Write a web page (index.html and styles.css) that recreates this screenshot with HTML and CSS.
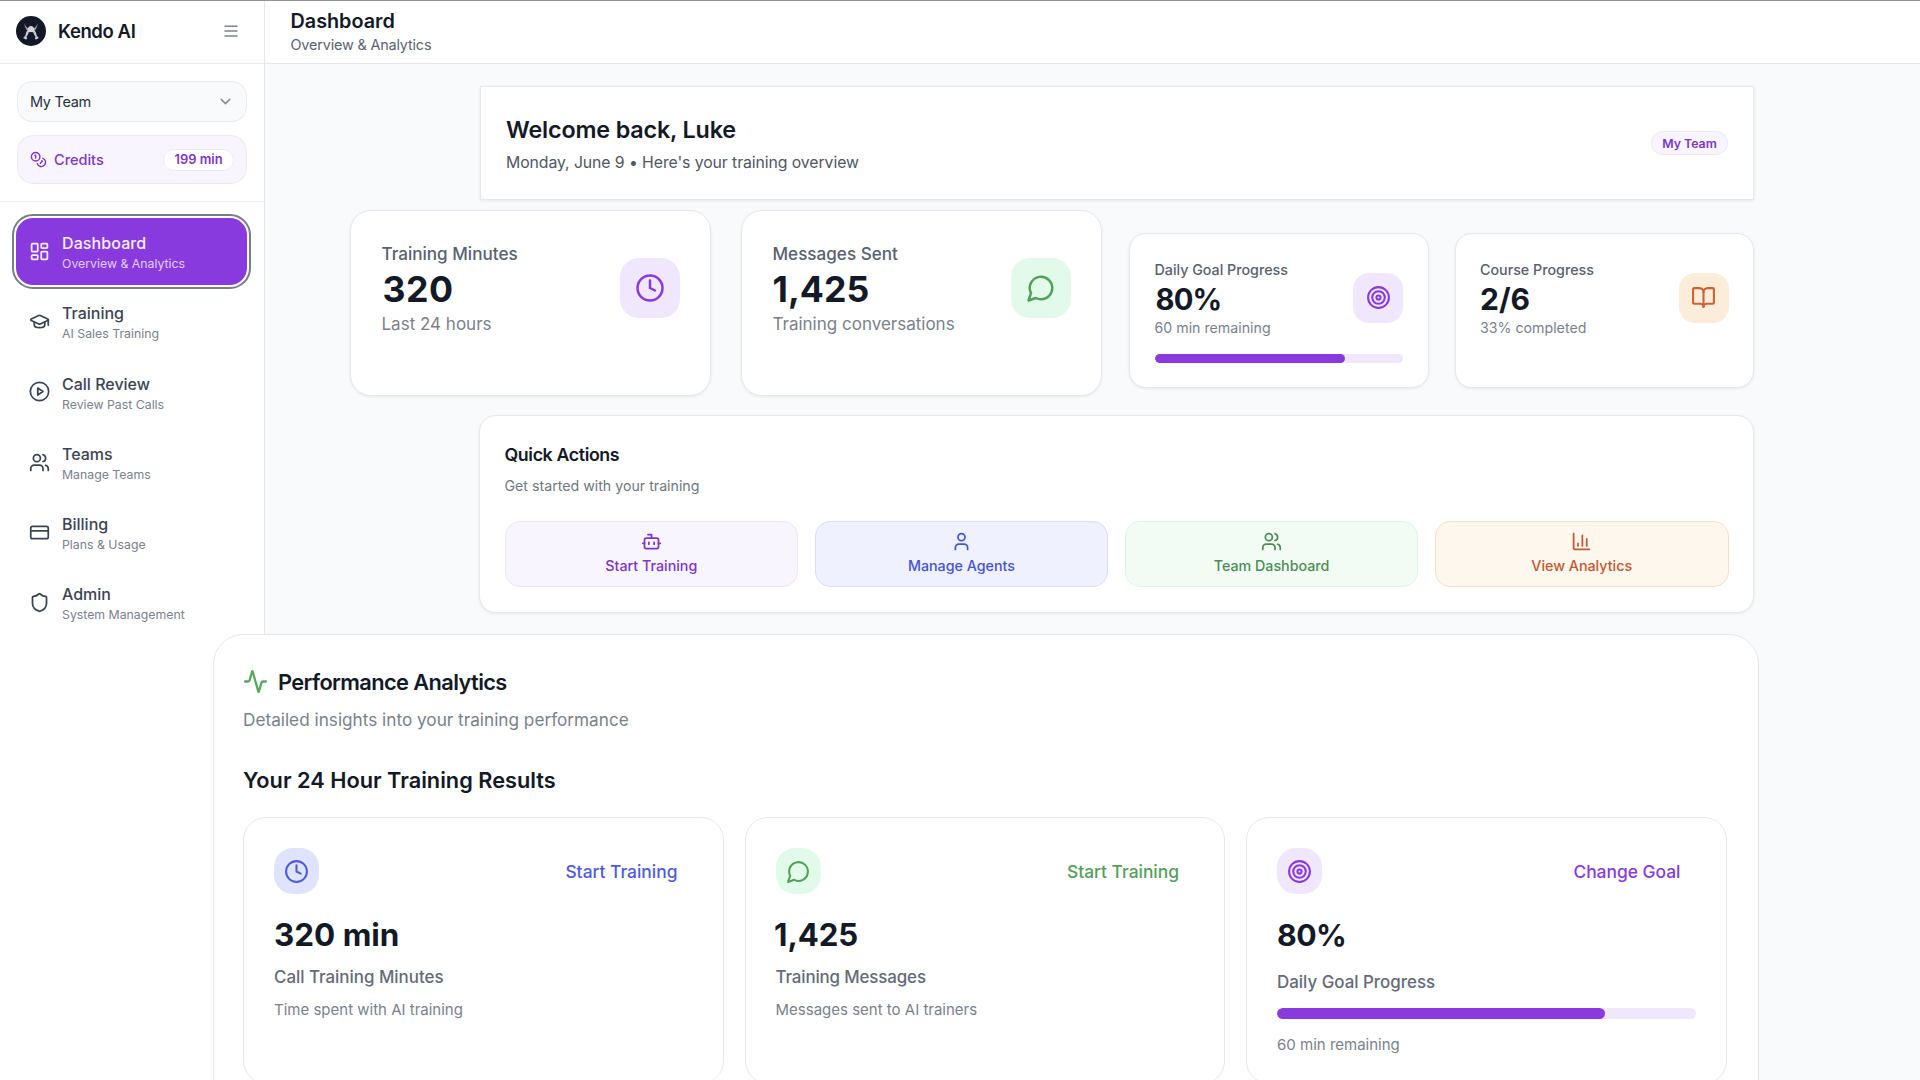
FILE: index.html
```html
<!DOCTYPE html>
<html lang="en">
<head>
<meta charset="utf-8">
<title>Kendo AI – Dashboard</title>
<link rel="stylesheet" href="styles.css">
</head>
<body>
<svg width="0" height="0" class="sprite" aria-hidden="true">
  <symbol id="clock" viewBox="0 0 24 24"><circle cx="12" cy="12" r="10"/><path d="M12 6v6l4 2"/></symbol>
  <symbol id="chat" viewBox="0 0 24 24"><path d="M7.9 20A9 9 0 1 0 4 16.1L2 22Z"/></symbol>
  <symbol id="target" viewBox="0 0 24 24"><circle cx="12" cy="12" r="10"/><circle cx="12" cy="12" r="6"/><circle cx="12" cy="12" r="2"/></symbol>
  <symbol id="users" viewBox="0 0 24 24"><path d="M16 21v-2a4 4 0 0 0-4-4H6a4 4 0 0 0-4 4v2"/><circle cx="9" cy="7" r="4"/><path d="M22 21v-2a4 4 0 0 0-3-3.87"/><path d="M16 3.13a4 4 0 0 1 0 7.75"/></symbol>
</svg>
<div class="app">
  <aside class="sidebar">
    <div class="brand">
      <svg class="logo" viewBox="0 0 30 30"><circle cx="15" cy="15" r="15" fill="#131926"/><path fill="#9fa3ab" d="M8.300 7.200C8.600 10.600 9.800 13.400 12 15l1.400-2C10.800 11.800 9.200 9.800 8.300 7.200zM21.700 7.200C21.400 10.600 20.200 13.400 18 15l-1.400-2C19.200 11.800 20.800 9.800 21.700 7.200z"/><path fill="#d3d5d9" d="M11.600 14.200C11.800 11.600 13.200 10 15 10s3.200 1.600 3.400 4.200l1.400 2.600c-1.500-.5-3-.8-4.800-.8s-3.300.3-4.800.8z"/><path fill="#c3c6cb" d="M10.400 15.600l2.600.8-2.400 4.400.6 2.200c-1.600.6-3.200 0-3.900-1.300l1.900-2zM19.600 15.600l-2.600.8 2.400 4.400-.6 2.200c1.600.6 3.200 0 3.900-1.300l-1.900-2z"/></svg>
      <span class="brand-name">Kendo AI</span>
      <svg class="icon menu" viewBox="0 0 24 24"><path d="M4 5.500h16M4 12h16M4 18.500h16"/></svg>
    </div>
    <div class="account">
      <div class="team-select"><span>My Team</span><svg class="icon chevron" viewBox="0 0 24 24"><path d="m6 9 6 6 6-6"/></svg></div>
      <div class="credits">
        <svg class="icon coins" viewBox="0 0 24 24"><circle cx="8" cy="8" r="6"/><path d="M18.090 10.370A6 6 0 1 1 10.340 18"/><path d="M7 6h1v4"/><path d="m16.710 13.880.7.710-2.820 2.820"/></svg>
        <span class="credits-label">Credits</span><span class="credits-pill">199 min</span>
      </div>
    </div>
    <nav class="nav">
      <a class="nav-item active"><svg class="icon" viewBox="0 0 24 24"><rect x="3" y="3" width="7" height="9" rx="1"/><rect x="14" y="3" width="7" height="5" rx="1"/><rect x="14" y="12" width="7" height="9" rx="1"/><rect x="3" y="16" width="7" height="5" rx="1"/></svg><span class="nav-text"><b>Dashboard</b><small>Overview &amp; Analytics</small></span></a>
      <a class="nav-item"><svg class="icon" viewBox="0 0 24 24"><path d="M21.420 10.922a1 1 0 0 0-.019-1.838L12.830 5.180a2 2 0 0 0-1.660 0L2.600 9.080a1 1 0 0 0 0 1.832l8.570 3.908a2 2 0 0 0 1.660 0z"/><path d="M22 10v6"/><path d="M6 12.500V16a6 3 0 0 0 12 0v-3.500"/></svg><span class="nav-text"><b>Training</b><small>AI Sales Training</small></span></a>
      <a class="nav-item"><svg class="icon" viewBox="0 0 24 24"><circle cx="12" cy="12" r="10.500"/><path d="m10 8 6 4-6 4z"/></svg><span class="nav-text"><b>Call Review</b><small>Review Past Calls</small></span></a>
      <a class="nav-item"><svg class="icon" ><use href="#users"/></svg><span class="nav-text"><b>Teams</b><small>Manage Teams</small></span></a>
      <a class="nav-item"><svg class="icon" viewBox="0 0 24 24"><rect x="2" y="5" width="20" height="14" rx="2"/><path d="M2 10h20"/></svg><span class="nav-text"><b>Billing</b><small>Plans &amp; Usage</small></span></a>
      <a class="nav-item"><svg class="icon" viewBox="0 0 24 24"><path d="M20 13c0 5-3.500 7.500-7.660 8.950a1 1 0 0 1-.67-.01C7.500 20.500 4 18 4 13V6a1 1 0 0 1 1-1c2 0 4.500-1.200 6.240-2.720a1.170 1.170 0 0 1 1.520 0C14.510 3.810 17 5 19 5a1 1 0 0 1 1 1z"/></svg><span class="nav-text"><b>Admin</b><small>System Management</small></span></a>
    </nav>
  </aside>

  <div class="page">
    <header class="topbar">
      <h1>Dashboard</h1>
      <p>Overview &amp; Analytics</p>
    </header>
    <main class="content">
      <section class="welcome">
        <div><h2>Welcome back, Luke</h2><p>Monday, June 9 • Here's your training overview</p></div>
        <span class="team-badge">My Team</span>
      </section>

      <section class="stats">
        <article class="stat large">
          <div class="stat-row"><div class="stat-text"><h3>Training Minutes</h3><strong class="wide">320</strong><p>Last 24 hours</p></div><span class="tile purple"><svg class="icon"><use href="#clock"/></svg></span></div>
        </article>
        <article class="stat large">
          <div class="stat-row"><div class="stat-text"><h3>Messages Sent</h3><strong>1,425</strong><p>Training conversations</p></div><span class="tile green"><svg class="icon"><use href="#chat"/></svg></span></div>
        </article>
        <article class="stat">
          <div class="stat-row"><div class="stat-text"><h3>Daily Goal Progress</h3><strong class="percent">80%</strong><p>60 min remaining</p></div><span class="tile purple"><svg class="icon"><use href="#target"/></svg></span></div>
          <div class="meter"><span style="width:76.8%"></span></div>
        </article>
        <article class="stat">
          <div class="stat-row"><div class="stat-text"><h3>Course Progress</h3><strong>2/6</strong><p>33% completed</p></div><span class="tile orange"><svg class="icon" viewBox="0 0 24 24"><path d="M12 7v14"/><path d="M3 18a1 1 0 0 1-1-1V4a1 1 0 0 1 1-1h5a4 4 0 0 1 4 4 4 4 0 0 1 4-4h5a1 1 0 0 1 1 1v13a1 1 0 0 1-1 1h-6a3 3 0 0 0-3 3 3 3 0 0 0-3-3z"/></svg></span></div>
        </article>
      </section>

      <section class="quick">
        <h2>Quick Actions</h2>
        <p>Get started with your training</p>
        <div class="actions">
          <button class="action purple"><svg class="icon" viewBox="0 0 24 24"><path d="M12 8V4H8"/><rect width="16" height="12" x="4" y="8" rx="2"/><path d="M2 14h2M20 14h2M15 13v2M9 13v2"/></svg>Start Training</button>
          <button class="action indigo"><svg class="icon" viewBox="0 0 24 24"><path d="M19 21v-2a4 4 0 0 0-4-4H9a4 4 0 0 0-4 4v2"/><circle cx="12" cy="7" r="4"/></svg>Manage Agents</button>
          <button class="action green"><svg class="icon"><use href="#users"/></svg>Team Dashboard</button>
          <button class="action orange"><svg class="icon" viewBox="0 0 24 24"><path d="M3 3v16a2 2 0 0 0 2 2h16"/><path d="M18 17V9M13 17V5M8 17v-3"/></svg>View Analytics</button>
        </div>
      </section>

      <section class="performance">
        <h2><svg class="icon" viewBox="0 0 24 24"><path d="M22 12h-2.480a2 2 0 0 0-1.930 1.460l-2.350 8.360a.25.25 0 0 1-.48 0L9.240 2.180a.25.25 0 0 0-.48 0l-2.350 8.360A2 2 0 0 1 4.490 12H2"/></svg>Performance Analytics</h2>
        <p class="lead">Detailed insights into your training performance</p>
        <h3>Your 24 Hour Training Results</h3>
        <div class="results">
          <article class="result">
            <div class="result-top"><span class="tile indigo"><svg class="icon"><use href="#clock"/></svg></span><a class="indigo-text">Start Training</a></div>
            <strong>320 min</strong><h4>Call Training Minutes</h4><p>Time spent with AI training</p>
          </article>
          <article class="result messages">
            <div class="result-top"><span class="tile green"><svg class="icon"><use href="#chat"/></svg></span><a class="green-text">Start Training</a></div>
            <strong>1,425</strong><h4>Training Messages</h4><p>Messages sent to AI trainers</p>
          </article>
          <article class="result goal">
            <div class="result-top"><span class="tile purple"><svg class="icon"><use href="#target"/></svg></span><a class="purple-text">Change Goal</a></div>
            <strong>80%</strong><h4>Daily Goal Progress</h4><div class="meter"><span style="width:78.3%"></span></div><p>60 min remaining</p>
          </article>
        </div>
      </section>
    </main>
  </div>
</div>
</body>
</html>
```
FILE: styles.css
```css
* { box-sizing: border-box; margin: 0; padding: 0; }
body { width: 1920px; height: 1080px; overflow: hidden; background: #fff; color: #131926; font-family: Inter, "Liberation Sans", sans-serif; }
h1, h2, h3, h4 { font-weight: 600; }
.sprite { display: none; }
.icon { flex: none; fill: none; stroke: currentColor; stroke-width: 2; stroke-linecap: round; stroke-linejoin: round; }

.app { display: grid; grid-template-columns: 265px 1fr; height: 1080px; border-top: 1px solid #929299; overflow: hidden; }

/* Sidebar */
.sidebar { border-right: 1px solid #e5e7eb; background: #fff; }
.brand { display: flex; align-items: center; height: 63px; padding: 0 24px 3px 16px; border-bottom: 1px solid #e9ebee; }
.logo { width: 30px; height: 30px; }
.brand-name { margin: 0 auto 0 12px; font-size: 18.500px; font-weight: 600; letter-spacing: -.4px; }
.menu { width: 18px; height: 18px; color: #7c838f; }
.account { display: flex; flex-direction: column; gap: 13px; height: 138px; padding: 17px 17px 0; border-bottom: 1px solid #eff0f3; }
.team-select { display: flex; align-items: center; justify-content: space-between; height: 41px; padding: 0 12px; border: 1px solid #e8eaee; border-radius: 15px; background: #f9fafb; color: #28303e; font-size: 14.500px; letter-spacing: -.3px; }
.chevron { width: 17px; height: 17px; color: #858b95; }
.credits { display: flex; align-items: center; height: 49px; padding: 0 12px; border: 1px solid #efe6fd; border-radius: 16px; background: #f9f5fe; color: #7d36cb; }
.coins { width: 17px; height: 17px; }
.credits-label { margin: 0 auto 0 7px; font-size: 14.500px; font-weight: 500; }
.credits-pill { display: grid; place-items: center; width: 71px; height: 22px; border: 1px solid #efe6fd; border-radius: 11px; background: #fff; font-size: 12.900px; font-weight: 600; }
.nav { display: flex; flex-direction: column; gap: 3.700px; padding: 16px 17px 0 16px; }
.nav-item { display: flex; align-items: center; gap: 12px; height: 66.600px; padding-left: 13px; border-radius: 17px; color: #3b4454; }
.nav-item .icon { width: 21px; height: 21px; }
.nav-text { display: flex; flex-direction: column; padding-top: 3.500px; }
.nav-text b { font-size: 16px; line-height: 22px; font-weight: 500; }
.nav-text small { font-size: 12.300px; line-height: 20px; color: #7a818d; }
.nav-item.active { background: #883adf; color: #f7effe; outline: 2px solid #777d89; outline-offset: 2px; }
.nav-item.active b { letter-spacing: .1px; }
.nav-item.active small { color: #e3cffb; }

/* Page frame */
.page { min-width: 0; background: #f9fafc; }
.topbar { height: 63px; padding: 8px 25.500px 0; border-bottom: 1px solid #e6e8ec; background: #fff; }
.topbar h1 { font-size: 19.800px; line-height: 24.400px; }
.topbar p { font-size: 14.400px; line-height: 24px; letter-spacing: -.16px; color: #5b6370; }
.content { padding: 22px 166px 0 215px; }

.welcome, .stat, .quick, .performance, .result { border: 1px solid #e6e8ec; background: #fff; }
.welcome, .stat, .quick { box-shadow: 0 1px 3px rgba(17, 24, 39, .08); }
.welcome { display: flex; align-items: flex-start; justify-content: space-between; height: 114px; padding: 24.700px 25px; }
.welcome h2 { font-size: 23.300px; line-height: 36px; letter-spacing: -.15px; }
.welcome p { font-size: 15.800px; line-height: 29.400px; letter-spacing: -.08px; color: #4f5765; }
.team-badge { display: grid; place-items: center; align-self: center; width: 77px; height: 24px; border: 1px solid #efe6fd; border-radius: 12px; background: #f9f5fe; color: #7d36cb; font-size: 12.350px; font-weight: 600; }

/* Summary cards */
.stats { display: flex; align-items: flex-start; gap: 26px; height: 204.700px; margin: 10px 0 0 -130px; }
.stat { flex: 1 1 299px; height: 154.500px; margin-top: 23px; padding: 25.500px 24.500px 0; border-radius: 17px; }
.stat.large { flex: 0 0 361px; height: 186px; margin: 0 1px 0 0; padding: 31.300px 29.800px 0 30.500px; border-radius: 21px; }
.stat.large:first-child { margin-right: 4px; }
.stat-row { display: flex; align-items: center; justify-content: space-between; }
.stat-text { display: flex; flex-direction: column; }
.stat h3 { font-size: 14.280px; line-height: 20px; font-weight: 500; color: #596170; }
.stat strong { font-size: 30px; line-height: 39.600px; }
.stat .percent { padding-left: 1px; font-size: 29.200px; letter-spacing: -.8px; }
.stat p { font-size: 14.200px; line-height: 17px; color: #7a818d; }
.stat.large h3 { font-size: 17.100px; line-height: 24px; }
.stat.large strong { font-size: 35.700px; line-height: 47.400px; }
.stat.large .wide { padding-left: 1px; letter-spacing: .5px; }
.stat.large p { font-size: 17px; line-height: 20.200px; }
.tile { display: grid; place-items: center; flex: none; width: 50px; height: 50px; border-radius: 16px; }
.tile .icon { width: 25px; height: 25px; }
.large .tile { width: 60px; height: 60px; border-radius: 19px; }
.large .tile .icon { width: 30px; height: 30px; }
.tile.purple { background: #f1e7fd; color: #883adf; }
.tile.green { background: #e2fae9; color: #549f5c; }
.tile.orange { background: #fcecda; color: #cd6137; }
.tile.indigo { background: #e0e3fc; color: #4f5bdf; }
.meter { height: 9px; margin-top: 17.500px; border-radius: 6px; background: #f1e7fd; overflow: hidden; }
.meter span { display: block; height: 100%; border-radius: 6px; background: #883adf; }

/* Quick actions */
.quick { height: 198px; margin: .5px 0 0 -1px; padding: 24px 24.500px 0; border-radius: 17px; }
.quick h2 { font-size: 17.800px; line-height: 29px; letter-spacing: -.38px; }
.quick p { font-size: 14.200px; line-height: 33.200px; color: #70777f; }
.actions { display: grid; grid-template-columns: repeat(4, 1fr); gap: 16.600px; margin-top: 18.600px; }
.action { display: flex; flex-direction: column; align-items: center; justify-content: center; gap: 4px; height: 66px; border: 1px solid; border-radius: 15px; font: 500 14.280px/20px Inter, "Liberation Sans", sans-serif; }
.action .icon { width: 21px; height: 21px; }
.action.purple { background: #f9f5fe; border-color: #eee3fd; color: #7d36cb; }
.action.indigo { background: #eff2fe; border-color: #d9dcfa; color: #4554d4; }
.action.green { background: #f2fcf5; border-color: #dbf7e3; color: #4d8c57; }
.action.orange { background: #fef7ee; border-color: #f9dfc0; color: #c25730; }

/* Performance panel */
.performance { position: relative; z-index: 1; width: 1546px; height: 520px; margin: 20.500px 0 0 -267px; padding: 30px 31px 0 29px; border-radius: 30px; }
.performance h2 { display: flex; align-items: center; gap: 10px; font-size: 21.800px; line-height: 34px; letter-spacing: -.6px; }
.performance h2 .icon { width: 25px; height: 25px; color: #56a75f; stroke-width: 2.200; }
.lead { font-size: 17.200px; line-height: 41.400px; color: #7a818d; }
.performance h3 { margin-top: 19.500px; font-size: 21.750px; line-height: 40px; }
.results { display: grid; grid-template-columns: repeat(3, 1fr); gap: 20.600px; margin-top: 17.800px; }
.result { display: flex; flex-direction: column; height: 267px; padding: 30px 30.500px 0 30px; border-radius: 23px; }
.result-top { display: flex; align-items: center; justify-content: space-between; padding-right: 15px; }
.result-top a { font-size: 17.400px; font-weight: 500; }
.result .tile { width: 45.400px; height: 45.400px; border-radius: 19px; }
.result strong { margin-top: 21.400px; font-size: 31.400px; line-height: 40px; }
.result h4 { margin-top: 9.900px; font-size: 16.900px; line-height: 24px; font-weight: 500; color: #636b78; }
.result p { margin-top: 11px; font-size: 15px; line-height: 20px; color: #7a818d; }
.result.messages strong { margin-left: -1.500px; font-size: 31.200px; letter-spacing: -.1px; }
.result.messages h4 { letter-spacing: -.13px; }
.result.goal strong { font-size: 30.300px; letter-spacing: -.6px; }
.result.goal h4 { margin-top: 15px; }
.result.goal p { margin-top: 15.500px; }
.result .meter { height: 11px; margin-top: 14.200px; }
.indigo-text { color: #4f5bdf; }
.green-text { color: #549f5c; }
.purple-text { color: #883adf; }
```
